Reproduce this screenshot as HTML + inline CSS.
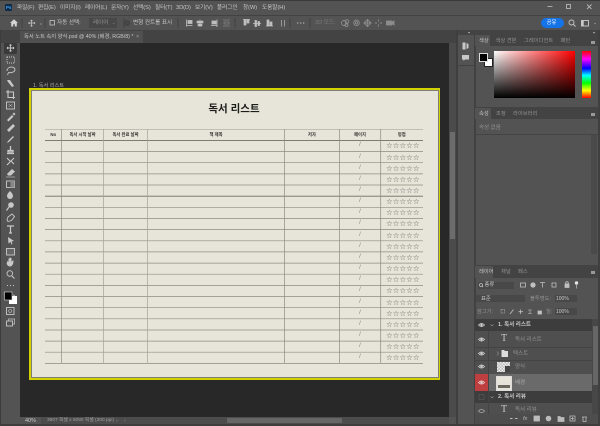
<!DOCTYPE html>
<html lang="ko"><head><meta charset="utf-8"><title>독서 리스트</title>
<style>
html,body{margin:0;padding:0;width:600px;height:426px;overflow:hidden;background:#3c3c3c}
#r{position:relative;width:600px;height:426px;overflow:hidden;filter:blur(.3px);font-family:"Liberation Sans","Noto Sans CJK KR",sans-serif}
#r div{position:absolute}
.t{white-space:nowrap;color:#c8c8c8;font-size:5.6px;line-height:8px;height:8px}
.d{color:#929292}
.h{white-space:nowrap;color:#33332f;font-size:4.3px;line-height:6px;height:6px;font-weight:700;text-align:center;top:131.5px}
svg{position:absolute;left:0;top:0}
</style></head><body><div id="r">
<div style="left:0;top:0;width:600px;height:426px;background:#535353"></div>
<div style="left:0;top:0;width:600px;height:1px;background:#3a3a3a"></div>
<div style="left:0;top:15px;width:600px;height:1px;background:#424242"></div>
<div style="left:0;top:30px;width:457px;height:13px;background:#434343"></div>
<div style="left:457px;top:30px;width:143px;height:5px;background:#434343"></div>
<div style="left:20px;top:31px;width:123px;height:12px;background:#505050"></div>
<div style="left:20px;top:43px;width:429px;height:374px;background:#282828"></div>
<div style="left:0;top:30px;width:1px;height:396px;background:#3c3c3c"></div>
<div style="left:449px;top:43px;width:7px;height:374px;background:#4b4b4b"></div>
<div style="left:449.5px;top:132px;width:5.5px;height:107px;background:#6c6c6c"></div>
<div style="left:456px;top:30px;width:2px;height:396px;background:#3f3f3f"></div>
<div style="left:474px;top:35px;width:1.5px;height:391px;background:#414141"></div>
<div style="left:458px;top:65px;width:16px;height:1px;background:#424242"></div>
<div style="left:598px;top:30px;width:2px;height:396px;background:#3f3f3f"></div>
<div style="left:20px;top:417px;width:429px;height:6.5px;background:#4c4c4c"></div>
<div style="left:20px;top:417px;width:21px;height:6.5px;background:#535353"></div>
<div style="left:227px;top:417.5px;width:115px;height:5.5px;background:#666"></div>
<div style="left:0;top:424px;width:600px;height:2px;background:#3c3c3c"></div>
<div style="left:4px;top:43px;width:13px;height:11px;background:#3a3a3a;border-radius:1px"></div>

<!-- Color panel -->
<div style="left:475px;top:35px;width:123px;height:11px;background:#434343"></div>
<div style="left:475px;top:35px;width:15px;height:11px;background:#535353"></div>
<div style="left:475px;top:107px;width:123px;height:12px;background:#434343"></div>
<div style="left:475px;top:108px;width:16px;height:11px;background:#535353"></div>
<div style="left:475px;top:134px;width:123px;height:1px;background:#444"></div>
<div style="left:591px;top:135px;width:6px;height:119px;background:#4a4a4a"></div>
<div style="left:475px;top:265px;width:123px;height:13px;background:#434343"></div>
<div style="left:475px;top:266px;width:18px;height:12px;background:#535353"></div>
<div style="left:494px;top:51px;width:81px;height:47px;background:linear-gradient(to top,#000,rgba(0,0,0,0)),linear-gradient(to right,#fff,#f00)"></div>
<div style="left:582px;top:51px;width:9px;height:47px;background:linear-gradient(to bottom,#f00,#f0f 17%,#00f 37%,#0ff 52%,#0f0 68%,#ff0 84%,#f00)"></div>
<div style="left:484px;top:58px;width:7px;height:7px;background:#fff;border:.5px solid #222"></div>
<div style="left:479px;top:53px;width:7px;height:7px;background:#000;border:.7px solid #ddd"></div>

<!-- Layers panel rows -->
<div style="left:475px;top:319px;width:117px;height:12px;background:#3d3d3d"></div>
<div style="left:475px;top:331px;width:117px;height:43px;background:#4f4f4f"></div>
<div style="left:475px;top:346.5px;width:117px;height:.6px;background:#444"></div>
<div style="left:475px;top:360px;width:117px;height:.6px;background:#444"></div>
<div style="left:475px;top:374px;width:117px;height:17px;background:#6a6a6a"></div>
<div style="left:475px;top:374px;width:13px;height:17px;background:#bd3f3f"></div>
<div style="left:475px;top:391px;width:117px;height:12px;background:#3d3d3d"></div>
<div style="left:475px;top:403px;width:117px;height:11px;background:#4f4f4f"></div>
<div style="left:488px;top:331px;width:.6px;height:83px;background:#444"></div>
<div style="left:592px;top:319px;width:6px;height:95px;background:#474747"></div>
<div style="left:592.5px;top:326px;width:5px;height:59px;background:#666"></div>
<div style="left:475px;top:414px;width:123px;height:10px;background:#4d4d4d"></div>
<div style="left:478px;top:282px;width:36px;height:7px;background:#484848"></div>
<div style="left:476px;top:295px;width:49px;height:7px;background:#484848"></div>
<div style="left:555px;top:295px;width:22px;height:7px;background:#484848"></div>
<div style="left:555px;top:308px;width:22px;height:7px;background:#484848"></div>
<div style="left:89px;top:18px;width:28px;height:10px;background:#484848"></div>
<div style="left:541px;top:18px;width:23px;height:10px;background:#1473e6;border-radius:5px"></div>
<div style="left:497px;top:362px;width:13px;height:10px;background:repeating-conic-gradient(#bbb 0 25%,#eee 0 50%) 0 0/3px 3px"></div>
<div style="left:505px;top:366px;width:5px;height:6px;background:#444"></div>
<div style="left:496px;top:375.5px;width:14px;height:13.5px;background:#e7e5da;border:.7px solid #ddd"></div>
<div style="left:497.5px;top:385px;width:12px;height:2.5px;background:#6a685f"></div>

<!-- Document -->
<div style="left:29.3px;top:88px;width:411px;height:292px;background:#d2d200"></div>
<div style="left:31px;top:89.7px;width:407.6px;height:288.6px;box-sizing:border-box;background:#e7e5da;border:.9px solid #7f7f76;border-left-width:.5px;border-top-width:.5px"></div>

<svg width="600" height="426" viewBox="0 0 600 426" fill="none">
<g stroke="#8f8c7e" stroke-width=".7">
<path d="M45 129.3H423" stroke="#aaa89c"/>
<path d="M45 140.4H423" stroke="#6f6c5f" stroke-width=".9"/>
<path d="M45 151.6H423M45 162.7H423M45 173.9H423M45 185H423M45 207.3H423M45 218.5H423M45 229.6H423M45 240.8H423M45 251.9H423M45 263.1H423M45 274.2H423M45 285.4H423M45 296.5H423M45 307.7H423M45 318.8H423M45 330H423M45 341.1H423M45 352.2H423M45 363.4H423"/>
<path d="M45 196.2H423" stroke="#706d60" stroke-width=".9"/>
<path d="M61.6 129V363.4M284.4 129V363.4M339.6 129V363.4M380.7 129V363.4"/>
<path d="M103.5 129V363.4M147.4 129V363.4" stroke="#a5a397"/>
</g>
<!-- left tools -->
<g stroke="#c8c8c8" stroke-width=".9">
<path d="M10.5 44.5v7M7 48h7M10.5 44.5l-1 1M10.5 44.5l1 1M10.5 51.5l-1-1M10.5 51.5l1-1M7 48l1-1M7 48l1 1M14 48l-1-1M14 48l-1 1"/>
<rect x="7" y="57" width="7.5" height="6" stroke-dasharray="1 1"/>
<path d="M7 71c0-5 8-5 8-1.500 0 3-5 3.500-6.500 3l-1 2.500"/>
<path d="M7 80h3l4 6-2 1-4-5z" fill="#c8c8c8" stroke="none"/>
<path d="M8 90v7.500h7M6 92h7.500v7" stroke-width="1.100"/>
<rect x="6.500" y="102" width="8" height="7"/><path d="M8.500 104l4 3M12.500 104l-4 3" stroke-width=".5"/>
<path d="M7 120l5-5 1.500 1.500-5 5zM12.500 114l1.500-1.500 1.500 1.500-1.500 1.500z" fill="#c8c8c8" stroke="none"/>
<path d="M7 130l6-6 2 2-6 6z" fill="#c8c8c8" stroke="none"/>
<path d="M7 143l1-2 5-5 1 1-5 5z" fill="#c8c8c8" stroke="none"/>
<path d="M10.500 146v4M8 150.500h5v1.500H8zM7 153.500h7" stroke-width="1.300"/>
<path d="M7 165l7-7M7 158l3 3M11 161l3 3" stroke-width="1.100"/>
<path d="M7 174l5-5 3 2.500-4 4H8z" fill="#c8c8c8" stroke="none"/><path d="M6 177h9" stroke-width=".6"/>
<rect x="6.500" y="181" width="8" height="6.500"/><rect x="10.500" y="181" width="4" height="6.500" fill="#888" stroke="none"/>
<path d="M10 191c-2 2-3 3.500-3 5a3 3 0 0 0 6 0c0-1.500-1-3-3-5z" fill="#c8c8c8" stroke="none"/>
<circle cx="11" cy="205" r="2.800" fill="#c8c8c8" stroke="none"/><path d="M9 207l-2.500 3.500" stroke-width="1.200"/>
<path d="M7 220l1-3 4-3 2.500 2.500-3 4-3.500 1z"/>
<path d="M7 226h7M10.500 226v7M9 233h3" stroke-width="1.200"/>
<path d="M8 237l6 4-2.500.5 1 2.500-1 .5-1-2.500-2 1.500z" fill="#c8c8c8" stroke="none"/>
<rect x="6.500" y="248.500" width="8" height="6.500" fill="#666"/>
<path d="M7 263c0-3 1-2 1.500-1v-3.500h1v3-4h1v4-3.500h1v4l1-1.500h1c0 3-1 6-3.500 6-2 0-3-1.500-3.500-3.500z" fill="#c8c8c8" stroke="none"/>
<circle cx="9.800" cy="273.500" r="2.800"/><path d="M12 276l2.500 2.500" stroke-width="1.100"/>
<path d="M7 285.500h1M10 285.500h1M13 285.500h1" stroke-width="1.100"/>
<path d="M13 295c1.500 0 2 1 2 2.500M14 299l1.500-1.500" stroke-width=".7"/>
<rect x="6.500" y="307.500" width="7.500" height="7"/><circle cx="10.200" cy="311" r="1.500" stroke-width=".6"/>
<rect x="6.500" y="321" width="6" height="5"/><path d="M8.500 321v-2h6v5h-2" stroke-width=".7"/>
</g>
<rect x="4" y="292" width="3" height="3" fill="#111" stroke="#aaa" stroke-width=".3"/>
<rect x="9" y="296" width="8" height="8" fill="#fff"/>
<rect x="4.500" y="292" width="7.500" height="8" fill="#000" stroke="#ddd" stroke-width=".6"/>
<!-- options bar icons -->
<path d="M10 23l4-3.800 4 3.800h-1.200v3.500h-2v-2.300h-1.600v2.300h-2V23z" fill="#d5d5d5"/>
<g stroke="#c4c4c4" stroke-width=".8">
<path d="M31.500 20v6.500M28.500 23h6.500M31.500 20l-1 1M31.500 20l1 1M31.500 26.500l-1-1M31.500 26.500l1-1M28.500 23l1-1M28.500 23l1 1M35 23l-1-1M35 23l-1 1"/>
<path d="M40 23.500l1 1 1-1" stroke-width=".5"/>
<rect x="50" y="20.500" width="4.500" height="4.500"/>
<circle cx="127" cy="23" r="2.400" stroke="#3c3c3c" fill="#484848"/>
<path d="M186.500 19.500v7M186.500 25.500h6M192 20.500v3h-4v-3z" stroke-width=".8" fill="#bbb"/>
<path d="M200 19.500v7.500M197 21h6v2h-6zM198 24h4v2h-4z" stroke-width=".6" fill="#bbb"/>
<path d="M217 19.500v7.500M211 25.500h6M212 21h4v3h-4z" stroke-width=".8" fill="#bbb"/>
<path d="M223 20h7M223 26h7M224 22h5v2h-5z" stroke-width=".5" stroke="#999"/>
<path d="M243 19.500h7M244 20v5h2v-5zM247 20v3h2v-3z" stroke-width=".7" fill="#bbb"/>
<path d="M253 23.500h8M255 20.500h1.500v6H255zM258 21.500h1.500v4H258z" stroke-width=".7" fill="#bbb"/>
<path d="M266 26h7M267 20h2v5.500h-2zM270 22h2v3.500h-2z" stroke-width=".7" fill="#bbb"/>
<path d="M281.500 20v6.500M284.500 20v6.500" stroke="#999" stroke-width="1"/>
<path d="M297 23h1.300M300 23h1.300M303 23h1.300" stroke-width="1.100"/>
</g>
<g stroke="#3f3f3f" stroke-width=".8">
<path d="M22 18v10M45 18v10M124 18v10M178 18v10M235 18v10M290 18v10M310 18v10"/>
</g>
<g stroke="#8c8c8c" stroke-width=".9">
<circle cx="344" cy="23" r="2.500"/><circle cx="347" cy="21.500" r="1.800"/><circle cx="346.500" cy="25" r="1.500"/>
<circle cx="356.500" cy="22.800" r="2.800"/><circle cx="356.500" cy="22.800" r="1.200"/>
<path d="M364 23l3.500-3.500 3.500 3.500-3.500 3.500zM367.500 19v8M363.500 23h8"/>
<path d="M375 23h2M380 23h2M378.500 19.500v2M378.500 24.500v2"/>
<rect x="386.500" y="21" width="5" height="4" fill="#8c8c8c"/><path d="M392 22l2-1v4l-2-1z" fill="#8c8c8c"/>
</g>
<!-- window + right icons -->
<g stroke="#b5b5b5" stroke-width=".9">
<path d="M547.500 6.500h5"/>
<rect x="566.500" y="4.500" width="4" height="4"/>
<path d="M587 4.500l4.500 4.500M591.500 4.500l-4.500 4.500"/>
<circle cx="571.500" cy="22.500" r="2.500" stroke="#ccc"/><path d="M573.500 24.500l2 2" stroke="#ccc"/>
<rect x="581.500" y="20.500" width="7" height="5.500" stroke="#ccc"/><rect x="581.500" y="20.500" width="2.200" height="5.500" fill="#ccc" stroke="none"/>
<path d="M594 23l1 1 1-1" stroke-width=".5"/>
</g>
<!-- panel strip icons -->
<g fill="#c8c8c8">
<path d="M462.500 42.500h3v7h-3zM466.500 43l2 1v4l-2 1zM462.500 44h1v1h-1z"/>
<path d="M462 55h7v4.500h-4l-1.500 1.500v-1.500H462z"/>
<rect x="468" y="32" width="2" height="1.200" fill="#999"/><rect x="593" y="32" width="2" height="1.200" fill="#999"/>
<rect x="591" y="41" width="4" height="3" fill="#999"/>
<rect x="591" y="113" width="4" height="3" fill="#999"/>
<rect x="591" y="271" width="4" height="3" fill="#999"/>
</g>
<!-- layer filter icons -->
<g stroke="#c0c0c0" stroke-width=".8">
<circle cx="481" cy="285" r="1.500"/><path d="M482 286.200l1 1"/>
<rect x="520.500" y="283" width="5" height="4"/>
<circle cx="533" cy="285" r="2.200" fill="#c0c0c0"/>
<path d="M540 282.500h5M542.500 282.500v5"/>
<rect x="552" y="283" width="4" height="4"/>
<rect x="565" y="284" width="4" height="3.500" fill="#c0c0c0"/><circle cx="567" cy="283" r="1.300"/>
<circle cx="576.500" cy="283" r="1.700" fill="#e5e5e5" stroke="none"/><path d="M576.500 285v3.500" stroke-width=".7"/>
<rect x="501" y="309.500" width="3.500" height="3.500" stroke-dasharray=".7 .7"/>
<path d="M510 314l3.500-4.500"/><path d="M520.500 309.500v4.500M518.500 311.700h4.500"/>
<path d="M528 310h4M530 310v3.500M528 313.500h4" stroke-width=".6"/>
<rect x="538" y="311" width="3.500" height="3" fill="#c0c0c0"/>
</g>
<!-- eyes -->
<g stroke="#d5d5d5" stroke-width=".8" fill="none">
<path d="M478.500 325c2-2.200 4-2.200 6 0-2 2.200-4 2.200-6 0z"/><circle cx="481.500" cy="325" r=".8" fill="#d5d5d5"/>
<path d="M478.500 339.500c2-2.200 4-2.200 6 0-2 2.200-4 2.200-6 0z"/><circle cx="481.500" cy="339.500" r=".8" fill="#d5d5d5"/>
<path d="M478.500 353.500c2-2.200 4-2.200 6 0-2 2.200-4 2.200-6 0z"/><circle cx="481.500" cy="353.500" r=".8" fill="#d5d5d5"/>
<path d="M478.500 366.500c2-2.200 4-2.200 6 0-2 2.200-4 2.200-6 0z"/><circle cx="481.500" cy="366.500" r=".8" fill="#d5d5d5"/>
<path d="M478.500 382.500c2-2.200 4-2.200 6 0-2 2.200-4 2.200-6 0z" stroke="#f3dcdc"/><circle cx="481.500" cy="382.500" r=".8" fill="#f3dcdc"/>
<path d="M478.500 411c2-2.200 4-2.200 6 0-2 2.200-4 2.200-6 0z" stroke="#aaa"/>
<rect x="479" y="394.500" width="5" height="5" stroke="#5c5c5c" stroke-width=".6"/>
<path d="M490.500 324.500l1.500 1.500 1.500-1.500M490.500 396.500l1.500 1.500 1.500-1.500" stroke="#999" stroke-width=".6"/>
<path d="M497 351.500l1.500 2-1.500 2" stroke="#999" stroke-width=".6"/>
</g>
<path d="M501.500 350h2.500l1 1h3v6h-6.500z" fill="#ddd"/>
<!-- layer bottom icons -->
<g stroke="#bcbcbc" stroke-width=".8" fill="none">
<path d="M510 418.500h2.500M515 418.500h2.500" stroke-width="1"/>
<rect x="534" y="416" width="5.500" height="5" fill="#bcbcbc"/>
<circle cx="548.500" cy="418.500" r="2.400" fill="#bcbcbc"/>
<path d="M558 416.500h2l1 1h3v4h-6z" fill="#bcbcbc"/>
<rect x="570" y="416" width="5" height="5"/><path d="M572.500 417v3M571 418.500h3"/>
<path d="M582 417h5M583 417v4.500h3V417"/>
</g>
</svg>

<!-- Menu -->
<div style="left:4.500px;top:4px;width:7px;height:7px;background:#0e2c4a;border-radius:1px"></div>
<div class="t" style="left:6px;top:3.500px;font-size:4.500px;color:#4aa6ee;font-weight:700">Ps</div>
<div class="t" style="left:17px;top:4px">파일(F)</div>
<div class="t" style="left:38px;top:4px">편집(E)</div>
<div class="t" style="left:60px;top:4px">이미지(I)</div>
<div class="t" style="left:85px;top:4px">레이어(L)</div>
<div class="t" style="left:111px;top:4px">문자(Y)</div>
<div class="t" style="left:133px;top:4px">선택(S)</div>
<div class="t" style="left:155px;top:4px">필터(T)</div>
<div class="t" style="left:176px;top:4px">3D(D)</div>
<div class="t" style="left:195px;top:4px">보기(V)</div>
<div class="t" style="left:217px;top:4px">플러그인</div>
<div class="t" style="left:243px;top:4px">창(W)</div>
<div class="t" style="left:262px;top:4px">도움말(H)</div>
<!-- Options -->
<div class="t" style="left:57px;top:19px">자동 선택:</div>
<div class="t d" style="left:93px;top:19px">레이어</div>
<div class="t d" style="left:112px;top:19px;font-size:4px">⌄</div>
<div class="t" style="left:133px;top:19px">변형 컨트롤 표시</div>
<div class="t d" style="left:315px;top:19px;color:#7a7a7a">3D 모드:</div>
<div class="t" style="left:546.500px;top:19px;color:#fff;font-size:5.400px">공유</div>
<!-- Tab -->
<div class="t" style="left:24px;top:33px;font-size:5.300px">독서 노트 속지 양식.psd @ 40% (배경, RGB/8) *</div>
<div class="t" style="left:136px;top:33px;font-size:5.500px;color:#aaa">×</div>
<div class="t" style="left:33px;top:81.500px;font-size:5.200px;color:#a8a8a8">1. 독서 리스트</div>

<!-- Document text -->
<div style="left:184px;top:100px;width:100px;height:18px;text-align:center;white-space:nowrap;font-size:10.500px;line-height:18px;font-weight:700;color:#1d1d1b">독서 리스트</div>
<div class="h" style="left:45px;width:16.500px">No</div>
<div class="h" style="left:61.500px;width:42px">독서 시작 날짜</div>
<div class="h" style="left:103.500px;width:44px">독서 완료 날짜</div>
<div class="h" style="left:147.500px;width:137px">책 제목</div>
<div class="h" style="left:284.500px;width:55px">저자</div>
<div class="h" style="left:339.500px;width:41px">페이지</div>
<div class="h" style="left:380.500px;width:42.500px">평점</div>
<div style="left:355px;top:140.400px;width:10px;text-align:center;font-size:6px;line-height:11.150px;color:#85847a">/<br>/<br>/<br>/<br>/<br>/<br>/<br>/<br>/<br>/<br>/<br>/<br>/<br>/<br>/<br>/<br>/<br>/<br>/<br>/</div>
<div style="left:386px;top:140.400px;width:36px;white-space:nowrap;font-family:'DejaVu Sans',sans-serif;font-size:7.500px;line-height:11.150px;color:#5f5e55">☆☆☆☆☆<br>☆☆☆☆☆<br>☆☆☆☆☆<br>☆☆☆☆☆<br>☆☆☆☆☆<br>☆☆☆☆☆<br>☆☆☆☆☆<br>☆☆☆☆☆<br>☆☆☆☆☆<br>☆☆☆☆☆<br>☆☆☆☆☆<br>☆☆☆☆☆<br>☆☆☆☆☆<br>☆☆☆☆☆<br>☆☆☆☆☆<br>☆☆☆☆☆<br>☆☆☆☆☆<br>☆☆☆☆☆<br>☆☆☆☆☆<br>☆☆☆☆☆</div>

<!-- Status -->
<div class="t" style="left:25px;top:416.500px;font-size:5.500px">40%</div>
<div class="t d" style="left:47px;top:416.500px;font-size:4.800px;color:#a0a0a0">3507 픽셀 x 5080 픽셀 (300 ppi)</div>
<div class="t d" style="left:116px;top:416.500px;font-size:5.500px">›</div>
<div class="t d" style="left:124px;top:416.500px;font-size:5px">‹</div>

<!-- Panel tabs -->
<div class="t" style="left:479px;top:37px;font-size:5.300px">색상</div>
<div class="t d" style="left:495.500px;top:37px;font-size:5.300px">색상 견본</div>
<div class="t d" style="left:524px;top:37px;font-size:5.300px">그레이디언트</div>
<div class="t d" style="left:560.500px;top:37px;font-size:5.300px">패턴</div>
<div class="t" style="left:479px;top:109.500px;font-size:5.300px">속성</div>
<div class="t d" style="left:496px;top:109.500px;font-size:5.300px">조정</div>
<div class="t d" style="left:513px;top:109.500px;font-size:5.300px">라이브러리</div>
<div class="t d" style="left:479px;top:123.500px;font-size:5.500px">속성 없음</div>
<div class="t" style="left:479px;top:267.500px;font-size:5.300px">레이어</div>
<div class="t d" style="left:501px;top:267.500px;font-size:5.300px">채널</div>
<div class="t d" style="left:518px;top:267.500px;font-size:5.300px">패스</div>
<!-- layers text -->
<div class="t" style="left:484.500px;top:281px;font-size:5.300px">종류</div>
<div class="t" style="left:481px;top:294.500px;font-size:5.300px">표준</div>
<div class="t d" style="left:530px;top:294.500px;font-size:5.300px">불투명도:</div>
<div class="t" style="left:556px;top:294.500px;font-size:5px">100%</div>
<div class="t d" style="left:477px;top:307.500px;font-size:5.300px">잠그기:</div>
<div class="t d" style="left:546px;top:307.500px;font-size:5.300px">칠:</div>
<div class="t" style="left:556px;top:307.500px;font-size:5px">100%</div>
<div class="t" style="left:498px;top:321px;font-size:5.500px;font-weight:700">1. 독서 리스트</div>
<div style="left:499px;top:334px;width:10px;height:10px;font-family:'Liberation Serif',serif;font-size:10px;line-height:10px;color:#ccc;text-align:center">T</div>
<div class="t d" style="left:515px;top:335.500px;font-size:5.500px">독서 리스트</div>
<div class="t d" style="left:513px;top:349.500px;font-size:5.500px">텍스트</div>
<div class="t d" style="left:515px;top:362.500px;font-size:5.500px">양식</div>
<div class="t d" style="left:515px;top:378.500px;font-size:5.500px;color:#aaa">배경</div>
<div class="t" style="left:498px;top:393px;font-size:5.500px;font-weight:700">2. 독서 리뷰</div>
<div style="left:499px;top:405px;width:10px;height:9px;overflow:hidden;font-family:'Liberation Serif',serif;font-size:10px;line-height:10px;color:#ccc;text-align:center">T</div>
<div class="t d" style="left:515px;top:406px;height:8px;overflow:hidden;font-size:5.500px">독서 리뷰</div>
<div class="t" style="left:523px;top:415px;font-size:5.500px;font-style:italic;color:#bcbcbc">fx</div>
</div></body></html>
